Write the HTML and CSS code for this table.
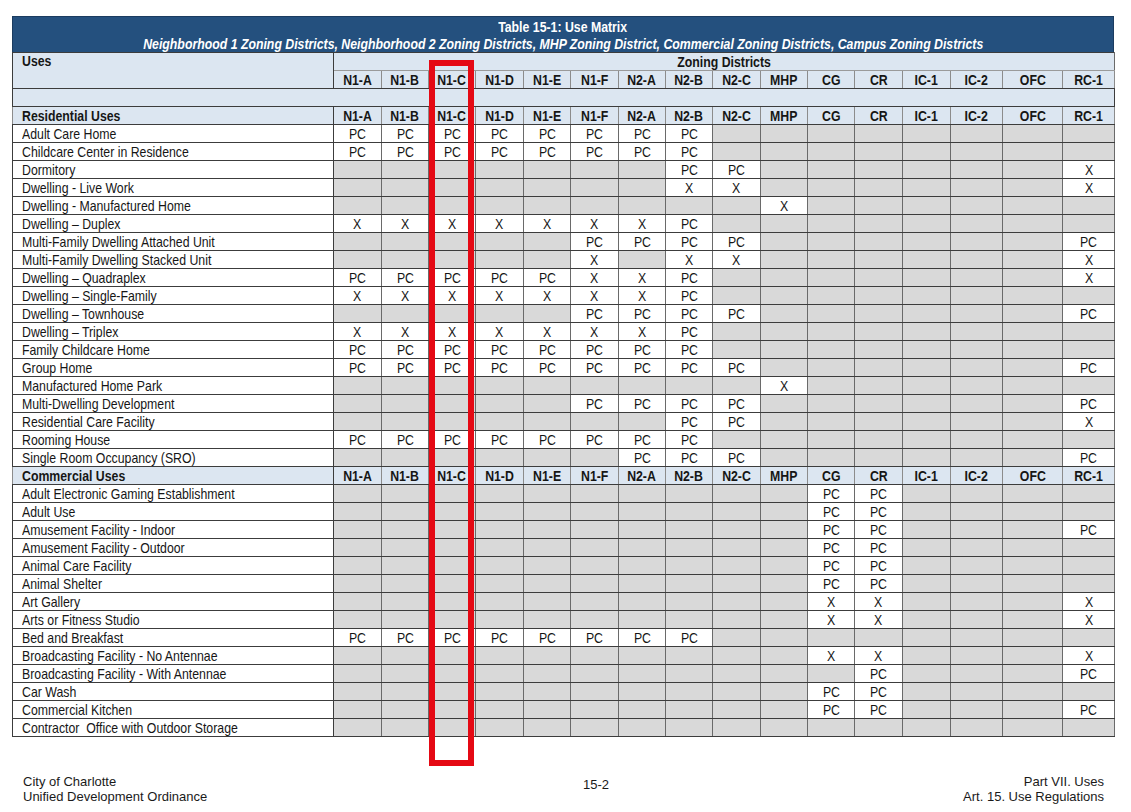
FILE: index.html
```html
<!DOCTYPE html>
<html>
<head>
<meta charset="utf-8">
<title>Table 15-1: Use Matrix</title>
<link rel="stylesheet" href="styles.css">
</head>
<body>
<div class="page">
  <div class="sheet">
    <div class="titlebar">
      <div class="title"><span class="t">Table 15-1: Use Matrix</span></div>
      <div class="sub"><span class="t">Neighborhood 1 Zoning Districts, Neighborhood 2 Zoning Districts, MHP Zoning District, Commercial Zoning Districts, Campus Zoning Districts</span></div>
    </div>
    <table class="matrix">
      <colgroup>
        <col class="c-use">
        <col class="c48"><col class="c47"><col class="c47"><col class="c48"><col class="c47"><col class="c48"><col class="c47"><col class="c47"><col class="c48"><col class="c47"><col class="c47"><col class="c48"><col class="c48">
        <col class="c52"><col class="c60"><col class="c52">
      </colgroup>
      <tbody>
        <tr class="hdr">
          <td class="use top" rowspan="2"><span class="t">Uses</span></td>
          <td class="zd" colspan="16"><span class="t">Zoning Districts</span></td>
        </tr>
        <tr class="hdr cols">
          <td><span class="t">N1-A</span></td><td><span class="t">N1-B</span></td><td><span class="t">N1-C</span></td><td><span class="t">N1-D</span></td><td><span class="t">N1-E</span></td><td><span class="t">N1-F</span></td><td><span class="t">N2-A</span></td><td><span class="t">N2-B</span></td><td><span class="t">N2-C</span></td><td><span class="t">MHP</span></td><td><span class="t">CG</span></td><td><span class="t">CR</span></td><td><span class="t">IC-1</span></td><td><span class="t">IC-2</span></td><td><span class="t">OFC</span></td><td><span class="t">RC-1</span></td>
        </tr>
        <tr class="spacer"><td class="blank" colspan="17"></td></tr>
        <tr class="hdr cols">
          <td class="use"><span class="t">Residential Uses</span></td>
          <td><span class="t">N1-A</span></td><td><span class="t">N1-B</span></td><td><span class="t">N1-C</span></td><td><span class="t">N1-D</span></td><td><span class="t">N1-E</span></td><td><span class="t">N1-F</span></td><td><span class="t">N2-A</span></td><td><span class="t">N2-B</span></td><td><span class="t">N2-C</span></td><td><span class="t">MHP</span></td><td><span class="t">CG</span></td><td><span class="t">CR</span></td><td><span class="t">IC-1</span></td><td><span class="t">IC-2</span></td><td><span class="t">OFC</span></td><td><span class="t">RC-1</span></td>
        </tr>
        <tr><td class="use"><span class="t">Adult Care Home</span></td><td><span class="t">PC</span></td><td><span class="t">PC</span></td><td><span class="t">PC</span></td><td><span class="t">PC</span></td><td><span class="t">PC</span></td><td><span class="t">PC</span></td><td><span class="t">PC</span></td><td><span class="t">PC</span></td><td></td><td></td><td></td><td></td><td></td><td></td><td></td><td></td></tr>
        <tr><td class="use"><span class="t">Childcare Center in Residence</span></td><td><span class="t">PC</span></td><td><span class="t">PC</span></td><td><span class="t">PC</span></td><td><span class="t">PC</span></td><td><span class="t">PC</span></td><td><span class="t">PC</span></td><td><span class="t">PC</span></td><td><span class="t">PC</span></td><td></td><td></td><td></td><td></td><td></td><td></td><td></td><td></td></tr>
        <tr><td class="use"><span class="t">Dormitory</span></td><td></td><td></td><td></td><td></td><td></td><td></td><td></td><td><span class="t">PC</span></td><td><span class="t">PC</span></td><td></td><td></td><td></td><td></td><td></td><td></td><td><span class="t">X</span></td></tr>
        <tr><td class="use"><span class="t">Dwelling - Live Work</span></td><td></td><td></td><td></td><td></td><td></td><td></td><td></td><td><span class="t">X</span></td><td><span class="t">X</span></td><td></td><td></td><td></td><td></td><td></td><td></td><td><span class="t">X</span></td></tr>
        <tr><td class="use"><span class="t">Dwelling - Manufactured Home</span></td><td></td><td></td><td></td><td></td><td></td><td></td><td></td><td></td><td></td><td><span class="t">X</span></td><td></td><td></td><td></td><td></td><td></td><td></td></tr>
        <tr><td class="use"><span class="t">Dwelling – Duplex</span></td><td><span class="t">X</span></td><td><span class="t">X</span></td><td><span class="t">X</span></td><td><span class="t">X</span></td><td><span class="t">X</span></td><td><span class="t">X</span></td><td><span class="t">X</span></td><td><span class="t">PC</span></td><td></td><td></td><td></td><td></td><td></td><td></td><td></td><td></td></tr>
        <tr><td class="use"><span class="t">Multi-Family Dwelling Attached Unit</span></td><td></td><td></td><td></td><td></td><td></td><td><span class="t">PC</span></td><td><span class="t">PC</span></td><td><span class="t">PC</span></td><td><span class="t">PC</span></td><td></td><td></td><td></td><td></td><td></td><td></td><td><span class="t">PC</span></td></tr>
        <tr><td class="use"><span class="t">Multi-Family Dwelling Stacked Unit</span></td><td></td><td></td><td></td><td></td><td></td><td><span class="t">X</span></td><td></td><td><span class="t">X</span></td><td><span class="t">X</span></td><td></td><td></td><td></td><td></td><td></td><td></td><td><span class="t">X</span></td></tr>
        <tr><td class="use"><span class="t">Dwelling – Quadraplex</span></td><td><span class="t">PC</span></td><td><span class="t">PC</span></td><td><span class="t">PC</span></td><td><span class="t">PC</span></td><td><span class="t">PC</span></td><td><span class="t">X</span></td><td><span class="t">X</span></td><td><span class="t">PC</span></td><td></td><td></td><td></td><td></td><td></td><td></td><td></td><td><span class="t">X</span></td></tr>
        <tr><td class="use"><span class="t">Dwelling – Single-Family</span></td><td><span class="t">X</span></td><td><span class="t">X</span></td><td><span class="t">X</span></td><td><span class="t">X</span></td><td><span class="t">X</span></td><td><span class="t">X</span></td><td><span class="t">X</span></td><td><span class="t">PC</span></td><td></td><td></td><td></td><td></td><td></td><td></td><td></td><td></td></tr>
        <tr><td class="use"><span class="t">Dwelling – Townhouse</span></td><td></td><td></td><td></td><td></td><td></td><td><span class="t">PC</span></td><td><span class="t">PC</span></td><td><span class="t">PC</span></td><td><span class="t">PC</span></td><td></td><td></td><td></td><td></td><td></td><td></td><td><span class="t">PC</span></td></tr>
        <tr><td class="use"><span class="t">Dwelling – Triplex</span></td><td><span class="t">X</span></td><td><span class="t">X</span></td><td><span class="t">X</span></td><td><span class="t">X</span></td><td><span class="t">X</span></td><td><span class="t">X</span></td><td><span class="t">X</span></td><td><span class="t">PC</span></td><td></td><td></td><td></td><td></td><td></td><td></td><td></td><td></td></tr>
        <tr><td class="use"><span class="t">Family Childcare Home</span></td><td><span class="t">PC</span></td><td><span class="t">PC</span></td><td><span class="t">PC</span></td><td><span class="t">PC</span></td><td><span class="t">PC</span></td><td><span class="t">PC</span></td><td><span class="t">PC</span></td><td><span class="t">PC</span></td><td></td><td></td><td></td><td></td><td></td><td></td><td></td><td></td></tr>
        <tr><td class="use"><span class="t">Group Home</span></td><td><span class="t">PC</span></td><td><span class="t">PC</span></td><td><span class="t">PC</span></td><td><span class="t">PC</span></td><td><span class="t">PC</span></td><td><span class="t">PC</span></td><td><span class="t">PC</span></td><td><span class="t">PC</span></td><td><span class="t">PC</span></td><td></td><td></td><td></td><td></td><td></td><td></td><td><span class="t">PC</span></td></tr>
        <tr><td class="use"><span class="t">Manufactured Home Park</span></td><td></td><td></td><td></td><td></td><td></td><td></td><td></td><td></td><td></td><td><span class="t">X</span></td><td></td><td></td><td></td><td></td><td></td><td></td></tr>
        <tr><td class="use"><span class="t">Multi-Dwelling Development</span></td><td></td><td></td><td></td><td></td><td></td><td><span class="t">PC</span></td><td><span class="t">PC</span></td><td><span class="t">PC</span></td><td><span class="t">PC</span></td><td></td><td></td><td></td><td></td><td></td><td></td><td><span class="t">PC</span></td></tr>
        <tr><td class="use"><span class="t">Residential Care Facility</span></td><td></td><td></td><td></td><td></td><td></td><td></td><td></td><td><span class="t">PC</span></td><td><span class="t">PC</span></td><td></td><td></td><td></td><td></td><td></td><td></td><td><span class="t">X</span></td></tr>
        <tr><td class="use"><span class="t">Rooming House</span></td><td><span class="t">PC</span></td><td><span class="t">PC</span></td><td><span class="t">PC</span></td><td><span class="t">PC</span></td><td><span class="t">PC</span></td><td><span class="t">PC</span></td><td><span class="t">PC</span></td><td><span class="t">PC</span></td><td></td><td></td><td></td><td></td><td></td><td></td><td></td><td></td></tr>
        <tr><td class="use"><span class="t">Single Room Occupancy (SRO)</span></td><td></td><td></td><td></td><td></td><td></td><td></td><td><span class="t">PC</span></td><td><span class="t">PC</span></td><td><span class="t">PC</span></td><td></td><td></td><td></td><td></td><td></td><td></td><td><span class="t">PC</span></td></tr>
        <tr class="hdr cols">
          <td class="use"><span class="t">Commercial Uses</span></td>
          <td><span class="t">N1-A</span></td><td><span class="t">N1-B</span></td><td><span class="t">N1-C</span></td><td><span class="t">N1-D</span></td><td><span class="t">N1-E</span></td><td><span class="t">N1-F</span></td><td><span class="t">N2-A</span></td><td><span class="t">N2-B</span></td><td><span class="t">N2-C</span></td><td><span class="t">MHP</span></td><td><span class="t">CG</span></td><td><span class="t">CR</span></td><td><span class="t">IC-1</span></td><td><span class="t">IC-2</span></td><td><span class="t">OFC</span></td><td><span class="t">RC-1</span></td>
        </tr>
        <tr><td class="use"><span class="t">Adult Electronic Gaming Establishment</span></td><td></td><td></td><td></td><td></td><td></td><td></td><td></td><td></td><td></td><td></td><td><span class="t">PC</span></td><td><span class="t">PC</span></td><td></td><td></td><td></td><td></td></tr>
        <tr><td class="use"><span class="t">Adult Use</span></td><td></td><td></td><td></td><td></td><td></td><td></td><td></td><td></td><td></td><td></td><td><span class="t">PC</span></td><td><span class="t">PC</span></td><td></td><td></td><td></td><td></td></tr>
        <tr><td class="use"><span class="t">Amusement Facility - Indoor</span></td><td></td><td></td><td></td><td></td><td></td><td></td><td></td><td></td><td></td><td></td><td><span class="t">PC</span></td><td><span class="t">PC</span></td><td></td><td></td><td></td><td><span class="t">PC</span></td></tr>
        <tr><td class="use"><span class="t">Amusement Facility - Outdoor</span></td><td></td><td></td><td></td><td></td><td></td><td></td><td></td><td></td><td></td><td></td><td><span class="t">PC</span></td><td><span class="t">PC</span></td><td></td><td></td><td></td><td></td></tr>
        <tr><td class="use"><span class="t">Animal Care Facility</span></td><td></td><td></td><td></td><td></td><td></td><td></td><td></td><td></td><td></td><td></td><td><span class="t">PC</span></td><td><span class="t">PC</span></td><td></td><td></td><td></td><td></td></tr>
        <tr><td class="use"><span class="t">Animal Shelter</span></td><td></td><td></td><td></td><td></td><td></td><td></td><td></td><td></td><td></td><td></td><td><span class="t">PC</span></td><td><span class="t">PC</span></td><td></td><td></td><td></td><td></td></tr>
        <tr><td class="use"><span class="t">Art Gallery</span></td><td></td><td></td><td></td><td></td><td></td><td></td><td></td><td></td><td></td><td></td><td><span class="t">X</span></td><td><span class="t">X</span></td><td></td><td></td><td></td><td><span class="t">X</span></td></tr>
        <tr><td class="use"><span class="t">Arts or Fitness Studio</span></td><td></td><td></td><td></td><td></td><td></td><td></td><td></td><td></td><td></td><td></td><td><span class="t">X</span></td><td><span class="t">X</span></td><td></td><td></td><td></td><td><span class="t">X</span></td></tr>
        <tr><td class="use"><span class="t">Bed and Breakfast</span></td><td><span class="t">PC</span></td><td><span class="t">PC</span></td><td><span class="t">PC</span></td><td><span class="t">PC</span></td><td><span class="t">PC</span></td><td><span class="t">PC</span></td><td><span class="t">PC</span></td><td><span class="t">PC</span></td><td></td><td></td><td></td><td></td><td></td><td></td><td></td><td></td></tr>
        <tr><td class="use"><span class="t">Broadcasting Facility - No Antennae</span></td><td></td><td></td><td></td><td></td><td></td><td></td><td></td><td></td><td></td><td></td><td><span class="t">X</span></td><td><span class="t">X</span></td><td></td><td></td><td></td><td><span class="t">X</span></td></tr>
        <tr><td class="use"><span class="t">Broadcasting Facility - With Antennae</span></td><td></td><td></td><td></td><td></td><td></td><td></td><td></td><td></td><td></td><td></td><td></td><td><span class="t">PC</span></td><td></td><td></td><td></td><td><span class="t">PC</span></td></tr>
        <tr><td class="use"><span class="t">Car Wash</span></td><td></td><td></td><td></td><td></td><td></td><td></td><td></td><td></td><td></td><td></td><td><span class="t">PC</span></td><td><span class="t">PC</span></td><td></td><td></td><td></td><td></td></tr>
        <tr><td class="use"><span class="t">Commercial Kitchen</span></td><td></td><td></td><td></td><td></td><td></td><td></td><td></td><td></td><td></td><td></td><td><span class="t">PC</span></td><td><span class="t">PC</span></td><td></td><td></td><td></td><td><span class="t">PC</span></td></tr>
        <tr><td class="use"><span class="t">Contractor&nbsp; Office with Outdoor Storage</span></td><td></td><td></td><td></td><td></td><td></td><td></td><td></td><td></td><td></td><td></td><td></td><td></td><td></td><td></td><td></td><td></td></tr>
      </tbody>
    </table>
  </div>
  <div class="highlight"></div>
  <footer class="footer">
    <div class="f-left">City of Charlotte<br>Unified Development Ordinance</div>
    <div class="f-mid">15-2</div>
    <div class="f-right">Part VII. Uses<br>Art. 15. Use Regulations</div>
  </footer>
</div>
</body>
</html>
```
FILE: styles.css
```css
* { box-sizing: border-box; }

body {
  margin: 0;
  background: #ffffff;
  color: #161616;
  font-family: "Liberation Sans", Arial, sans-serif;
}

.page {
  position: relative;
  width: 1131px;
  height: 812px;
  padding-top: 16px;
  overflow: hidden;
}

.sheet {
  margin-left: 12px;
  width: 1102px;
}

/* The source table is set in a narrow face: emulate it by condensing each text run */
.t {
  display: inline-block;
  transform: scaleX(0.82);
  transform-origin: center center;
  white-space: nowrap;
}

.titlebar {
  height: 36px;
  background: #24507e;
  color: #ffffff;
  text-align: center;
  font-weight: bold;
  font-size: 15px;
  border: 1px solid #1b3c60;
  border-bottom: none;
}

.titlebar .title { height: 17px; line-height: 19px; }
.titlebar .sub { font-style: italic; line-height: 19px; }

.matrix {
  width: 1102px;
  table-layout: fixed;
  border-collapse: collapse;
  font-size: 15px;
}

.c-use { width: 321px; }
.c47 { width: 47px; }
.c48 { width: 48px; }
.c52 { width: 52px; }
.c60 { width: 60px; }

.matrix td {
  height: 18px;
  padding: 0;
  line-height: 16px;
  text-align: center;
  white-space: nowrap;
  overflow: hidden;
  border-top: 1px solid #3c3c3c;
  border-bottom: 1px solid #3c3c3c;
  border-left: 1px solid #6a6a6a;
  border-right: 1px solid #6a6a6a;
  background: #ffffff;
}

.matrix td:empty { background: #d9d9d9; }

.matrix td.use {
  text-align: left;
  padding-left: 9px;
  border-left: 1px solid #3c3c3c;
  border-right: 1px solid #3c3c3c;
}

.matrix td.use .t { transform-origin: left center; }

.matrix td.top { vertical-align: top; }

.matrix tr.hdr td {
  background: #dce6f1;
  font-weight: bold;
}

.matrix tr.cols td { border-left-color: #8c8c8c; border-right-color: #8c8c8c; }
.matrix tr.cols td.use { border-right-color: #3c3c3c; }

.matrix td.zd { border-bottom-color: #9a9a9a; }

.matrix tr.spacer td.blank {
  background: #dce6f1;
  border-left: 1px solid #3c3c3c;
  border-right: 1px solid #3c3c3c;
}

.highlight {
  position: absolute;
  left: 429px;
  top: 60px;
  width: 45px;
  height: 706px;
  border: 6px solid #e50914;
}

.footer {
  display: grid;
  grid-template-columns: 560px auto 1fr;
  margin-top: 37px;
  padding: 0 27px 0 23px;
  font-size: 13px;
  line-height: 15px;
  color: #1a1a1a;
}

.f-mid { padding-top: 3px; }
.f-right { text-align: right; }
```
